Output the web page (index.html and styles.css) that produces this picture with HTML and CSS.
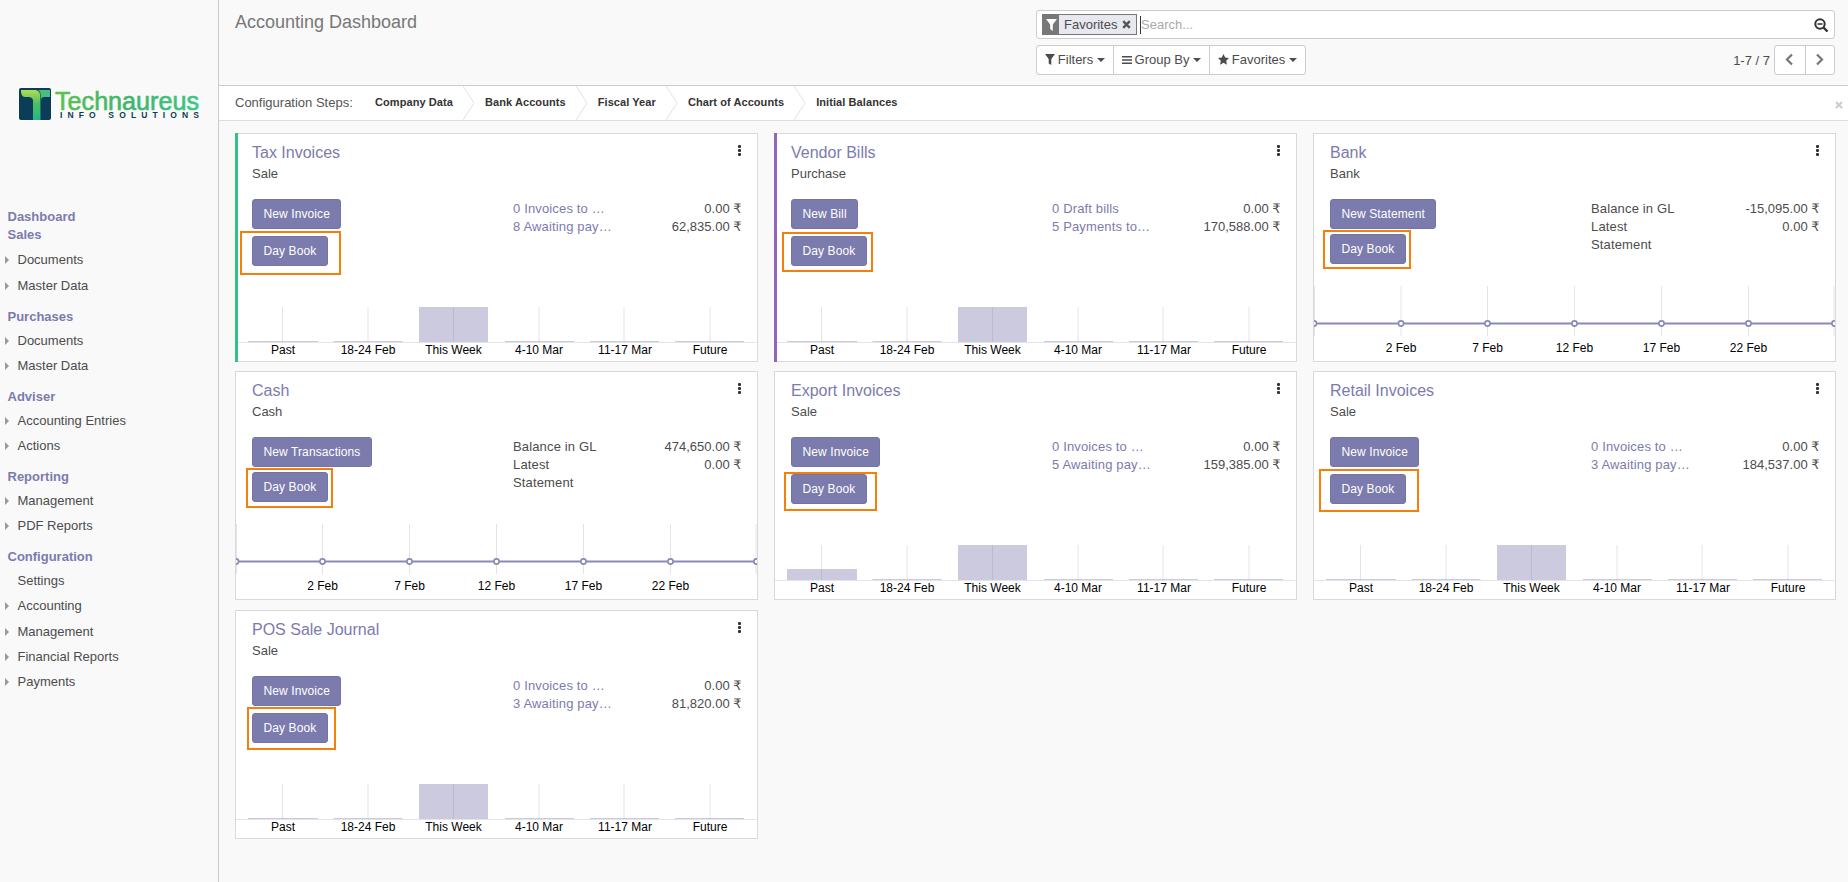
FILE: index.html
```html
<!DOCTYPE html>
<html lang="en">
<head>
<meta charset="utf-8">
<title>Accounting Dashboard</title>
<link rel="stylesheet" href="styles.css">
</head>
<body>
<div class="app">
  <aside class="sidebar">
    <svg class="logo" width="181" height="32" viewBox="0 0 181 32">
      <defs>
        <linearGradient id="lg-text" x1="0" y1="0" x2="1" y2="0">
          <stop offset="0" stop-color="#5cc24e"/><stop offset="0.5" stop-color="#3cb56c"/><stop offset="1" stop-color="#3cc884"/>
        </linearGradient>
        <linearGradient id="lg-t" x1="0" y1="0" x2="0" y2="1">
          <stop offset="0" stop-color="#b4dc50"/><stop offset="0.45" stop-color="#4cc064"/><stop offset="1" stop-color="#22b58a"/>
        </linearGradient>
      </defs>
      <rect width="32" height="32" rx="2" fill="#0c3d58"/>
      <path d="M2 2H15C19 2 21 4 21 7V32H14V13C14 10 12 9 9 9H6C3 9 2 6 2 2z" fill="url(#lg-t)"/>
      <path d="M19 2H31V9H25C23 9 22 10 22 13V32H21.6V7C21.6 5 21 3 19 2z" fill="#46c07c"/>
      <text class="logo-name" x="36" y="22" textLength="144" lengthAdjust="spacingAndGlyphs">Technaureus</text>
      <text class="logo-sub" x="41" y="29.5" textLength="139">INFO SOLUTIONS</text>
    </svg>
    <nav class="menu">
      <a class="menu-head">Dashboard</a>
      <section class="menu-section menu-first">
        <a class="menu-head">Sales</a>
        <ul class="menu-list">
          <li class="has-sub">Documents</li>
          <li class="has-sub">Master Data</li>
        </ul>
      </section>
      <section class="menu-section">
        <a class="menu-head">Purchases</a>
        <ul class="menu-list">
          <li class="has-sub">Documents</li>
          <li class="has-sub">Master Data</li>
        </ul>
      </section>
      <section class="menu-section">
        <a class="menu-head">Adviser</a>
        <ul class="menu-list">
          <li class="has-sub">Accounting Entries</li>
          <li class="has-sub">Actions</li>
        </ul>
      </section>
      <section class="menu-section">
        <a class="menu-head">Reporting</a>
        <ul class="menu-list">
          <li class="has-sub">Management</li>
          <li class="has-sub">PDF Reports</li>
        </ul>
      </section>
      <section class="menu-section">
        <a class="menu-head">Configuration</a>
        <ul class="menu-list">
          <li>Settings</li>
          <li class="has-sub">Accounting</li>
          <li class="has-sub">Management</li>
          <li class="has-sub">Financial Reports</li>
          <li class="has-sub">Payments</li>
        </ul>
      </section>
    </nav>
  </aside>

  <main class="main">
    <header class="control-panel">
      <h1 class="page-title">Accounting Dashboard</h1>
      <div class="controls">
        <div class="search-box">
          <div class="facet">
            <span class="facet-icon"><svg width="11" height="12" viewBox="0 0 11 12"><path d="M0 0h11L6.8 5.5V12L4.2 10V5.5z" fill="#fff"/></svg></span>
            <span class="facet-label">Favorites</span>
            <svg class="facet-close" width="9" height="9" viewBox="0 0 9 9"><path d="M1.2 1.2l6.6 6.6M7.8 1.2L1.2 7.8" stroke="#555" stroke-width="2.4"/></svg>
          </div>
          <span class="search-input">Search...</span>
          <svg class="search-icon" width="15" height="14" viewBox="0 0 15 14"><circle cx="6" cy="6" r="4.7" fill="none" stroke="#333" stroke-width="2"/><path d="M9.5 9.5l4 4" stroke="#333" stroke-width="2.4"/><path d="M3.5 6h5" stroke="#333" stroke-width="1.6"/></svg>
        </div>
        <div class="control-row">
          <div class="btn-group">
            <button class="tool-btn tool-filters"><svg width="10" height="11" viewBox="0 0 10 11"><path d="M0 0h10L6.3 5v6L3.7 9.4V5z" fill="#4c4c4c"/></svg>Filters<i class="caret"></i></button>
            <button class="tool-btn tool-group"><svg width="10" height="10" viewBox="0 0 10 10"><path d="M0 1h10v1.6H0zM0 4.2h10v1.6H0zM0 7.4h10V9H0z" fill="#4c4c4c"/></svg>Group By<i class="caret"></i></button>
            <button class="tool-btn tool-fav"><svg width="11" height="11" viewBox="0 0 11 11"><path d="M5.5 0l1.7 3.6 3.8.5-2.8 2.7.7 3.9-3.4-1.9-3.4 1.9.7-3.9L0 4.1l3.8-.5z" fill="#4c4c4c"/></svg>Favorites<i class="caret"></i></button>
          </div>
          <div class="pager">
            <span class="pager-text">1-7 / 7</span>
            <div class="btn-group">
              <button class="pager-btn"><svg width="9" height="13" viewBox="0 0 9 13"><path d="M7 1.5L2 6.5l5 5" fill="none" stroke="#777" stroke-width="2.2"/></svg></button>
              <button class="pager-btn"><svg width="9" height="13" viewBox="0 0 9 13"><path d="M2 1.5l5 5-5 5" fill="none" stroke="#777" stroke-width="2.2"/></svg></button>
            </div>
          </div>
        </div>
      </div>
    </header>

    <div class="steps-bar">
      <span class="steps-label">Configuration Steps:</span>
      <span class="step">Company Data</span>
      <svg class="step-arrow" width="11" height="34" viewBox="0 0 11 34"><path d="M0 0l11 17L0 34" fill="none" stroke="#e2e2e2"/></svg>
      <span class="step">Bank Accounts</span>
      <svg class="step-arrow" width="11" height="34" viewBox="0 0 11 34"><path d="M0 0l11 17L0 34" fill="none" stroke="#e2e2e2"/></svg>
      <span class="step">Fiscal Year</span>
      <svg class="step-arrow" width="11" height="34" viewBox="0 0 11 34"><path d="M0 0l11 17L0 34" fill="none" stroke="#e2e2e2"/></svg>
      <span class="step">Chart of Accounts</span>
      <svg class="step-arrow" width="11" height="34" viewBox="0 0 11 34"><path d="M0 0l11 17L0 34" fill="none" stroke="#e2e2e2"/></svg>
      <span class="step">Initial Balances</span>
      <svg class="steps-close" width="8" height="8" viewBox="0 0 8 8"><path d="M1 1l6 6M7 1L1 7" stroke="#ccc" stroke-width="2"/></svg>
    </div>

    <div class="dashboard">

      <article class="card stripe-green">
        <span class="dots"><i></i><i></i><i></i></span>
        <h2 class="card-title">Tax Invoices</h2>
        <p class="card-sub">Sale</p>
        <div class="card-body">
          <div class="actions"><button class="btn">New Invoice</button><button class="btn">Day Book</button></div>
          <div class="stats">
            <div class="stat"><a class="stat-label link">0 Invoices to Validate</a><span class="stat-value">0.00 ₹</span></div>
            <div class="stat"><a class="stat-label link">8 Awaiting payments</a><span class="stat-value">62,835.00 ₹</span></div>
          </div>
        </div>
        <svg class="chart chart-bar" viewBox="0 0 520.5 54">
          <path class="grid" d="M46.5 0v35M132 0v35M217.5 0v35M303 0v35M388 0v35M474 0v35"/>
          <path class="bars" d="M12 34h70v1H12zM97.5 34h69v1h-69zM183 0h69v35h-69zM269 34h69v1h-69zM354 34h69v1h-69zM439 34h69v1h-69z"/>
          <path class="axis" d="M0 35.5h520.5"/>
          <text class="tick" x="47" y="47">Past</text><text class="tick" x="132" y="47">18-24 Feb</text><text class="tick" x="217.5" y="47">This Week</text><text class="tick" x="303" y="47">4-10 Mar</text><text class="tick" x="389" y="47">11-17 Mar</text><text class="tick" x="474" y="47">Future</text>
        </svg>
        <span class="mark mark-1"></span>
      </article>

      <article class="card stripe-purple">
        <span class="dots"><i></i><i></i><i></i></span>
        <h2 class="card-title">Vendor Bills</h2>
        <p class="card-sub">Purchase</p>
        <div class="card-body">
          <div class="actions"><button class="btn">New Bill</button><button class="btn">Day Book</button></div>
          <div class="stats">
            <div class="stat"><a class="stat-label link">0 Draft bills</a><span class="stat-value">0.00 ₹</span></div>
            <div class="stat"><a class="stat-label link">5 Payments to do</a><span class="stat-value">170,588.00 ₹</span></div>
          </div>
        </div>
        <svg class="chart chart-bar" viewBox="0 0 520.5 54">
          <path class="grid" d="M46.5 0v35M132 0v35M217.5 0v35M303 0v35M388 0v35M474 0v35"/>
          <path class="bars" d="M12 34h70v1H12zM97.5 34h69v1h-69zM183 0h69v35h-69zM269 34h69v1h-69zM354 34h69v1h-69zM439 34h69v1h-69z"/>
          <path class="axis" d="M0 35.5h520.5"/>
          <text class="tick" x="47" y="47">Past</text><text class="tick" x="132" y="47">18-24 Feb</text><text class="tick" x="217.5" y="47">This Week</text><text class="tick" x="303" y="47">4-10 Mar</text><text class="tick" x="389" y="47">11-17 Mar</text><text class="tick" x="474" y="47">Future</text>
        </svg>
        <span class="mark mark-2"></span>
      </article>

      <article class="card card-cash">
        <span class="dots"><i></i><i></i><i></i></span>
        <h2 class="card-title">Bank</h2>
        <p class="card-sub">Bank</p>
        <div class="card-body">
          <div class="actions"><button class="btn">New Statement</button><button class="btn">Day Book</button></div>
          <div class="stats">
            <div class="stat"><span class="stat-label">Balance in GL</span><span class="stat-value">-15,095.00 ₹</span></div>
            <div class="stat"><span class="stat-label stat-wrap">Latest Statement</span><span class="stat-value">0.00 ₹</span></div>
          </div>
        </div>
        <svg class="chart chart-line" viewBox="0 0 520.5 75">
          <path class="grid" d="M.5 0v50M87 0v50M173.5 0v50M260.5 0v50M347.5 0v50M434.5 0v50M520 0v50"/>
          <path class="line" d="M0 37.5h520.5"/>
          <circle class="dot" cx="0" cy="37.5" r="2.6"/><circle class="dot" cx="87" cy="37.5" r="2.6"/><circle class="dot" cx="173.5" cy="37.5" r="2.6"/><circle class="dot" cx="260.5" cy="37.5" r="2.6"/><circle class="dot" cx="347.5" cy="37.5" r="2.6"/><circle class="dot" cx="434.5" cy="37.5" r="2.6"/><circle class="dot" cx="520.5" cy="37.5" r="2.6"/>
          <text class="tick" x="87" y="66">2 Feb</text><text class="tick" x="173.5" y="66">7 Feb</text><text class="tick" x="260.5" y="66">12 Feb</text><text class="tick" x="347.5" y="66">17 Feb</text><text class="tick" x="434.5" y="66">22 Feb</text>
        </svg>
        <span class="mark mark-3"></span>
      </article>

      <article class="card card-cash">
        <span class="dots"><i></i><i></i><i></i></span>
        <h2 class="card-title">Cash</h2>
        <p class="card-sub">Cash</p>
        <div class="card-body">
          <div class="actions"><button class="btn">New Transactions</button><button class="btn">Day Book</button></div>
          <div class="stats">
            <div class="stat"><span class="stat-label">Balance in GL</span><span class="stat-value">474,650.00 ₹</span></div>
            <div class="stat"><span class="stat-label stat-wrap">Latest Statement</span><span class="stat-value">0.00 ₹</span></div>
          </div>
        </div>
        <svg class="chart chart-line" viewBox="0 0 520.5 75">
          <path class="grid" d="M.5 0v50M86.5 0v50M173.5 0v50M260.5 0v50M347.5 0v50M434.5 0v50M520 0v50"/>
          <path class="line" d="M0 37.5h520.5"/>
          <circle class="dot" cx="0" cy="37.5" r="2.6"/><circle class="dot" cx="86.5" cy="37.5" r="2.6"/><circle class="dot" cx="173.5" cy="37.5" r="2.6"/><circle class="dot" cx="260.5" cy="37.5" r="2.6"/><circle class="dot" cx="347.5" cy="37.5" r="2.6"/><circle class="dot" cx="434.5" cy="37.5" r="2.6"/><circle class="dot" cx="520.5" cy="37.5" r="2.6"/>
          <text class="tick" x="86.5" y="65.5">2 Feb</text><text class="tick" x="173.5" y="65.5">7 Feb</text><text class="tick" x="260.5" y="65.5">12 Feb</text><text class="tick" x="347.5" y="65.5">17 Feb</text><text class="tick" x="434.5" y="65.5">22 Feb</text>
        </svg>
        <span class="mark mark-4"></span>
      </article>

      <article class="card">
        <span class="dots"><i></i><i></i><i></i></span>
        <h2 class="card-title">Export Invoices</h2>
        <p class="card-sub">Sale</p>
        <div class="card-body">
          <div class="actions"><button class="btn">New Invoice</button><button class="btn">Day Book</button></div>
          <div class="stats">
            <div class="stat"><a class="stat-label link">0 Invoices to Validate</a><span class="stat-value">0.00 ₹</span></div>
            <div class="stat"><a class="stat-label link">5 Awaiting payments</a><span class="stat-value">159,385.00 ₹</span></div>
          </div>
        </div>
        <svg class="chart chart-bar" viewBox="0 0 520.5 54">
          <path class="grid" d="M46.5 0v35M132 0v35M217.5 0v35M303 0v35M388 0v35M474 0v35"/>
          <path class="bars" d="M12 24h70v11H12zM97.5 34h69v1h-69zM183 0h69v35h-69zM269 34h69v1h-69zM354 34h69v1h-69zM439 34h69v1h-69z"/>
          <path class="axis" d="M0 35.5h520.5"/>
          <text class="tick" x="47" y="47">Past</text><text class="tick" x="132" y="47">18-24 Feb</text><text class="tick" x="217.5" y="47">This Week</text><text class="tick" x="303" y="47">4-10 Mar</text><text class="tick" x="389" y="47">11-17 Mar</text><text class="tick" x="474" y="47">Future</text>
        </svg>
        <span class="mark mark-5"></span>
      </article>

      <article class="card">
        <span class="dots"><i></i><i></i><i></i></span>
        <h2 class="card-title">Retail Invoices</h2>
        <p class="card-sub">Sale</p>
        <div class="card-body">
          <div class="actions"><button class="btn">New Invoice</button><button class="btn">Day Book</button></div>
          <div class="stats">
            <div class="stat"><a class="stat-label link">0 Invoices to Validate</a><span class="stat-value">0.00 ₹</span></div>
            <div class="stat"><a class="stat-label link">3 Awaiting payments</a><span class="stat-value">184,537.00 ₹</span></div>
          </div>
        </div>
        <svg class="chart chart-bar" viewBox="0 0 520.5 54">
          <path class="grid" d="M46.5 0v35M132 0v35M217.5 0v35M303 0v35M388 0v35M474 0v35"/>
          <path class="bars" d="M12 34h70v1H12zM97.5 34h69v1h-69zM183 0h69v35h-69zM269 34h69v1h-69zM354 34h69v1h-69zM439 34h69v1h-69z"/>
          <path class="axis" d="M0 35.5h520.5"/>
          <text class="tick" x="47" y="47">Past</text><text class="tick" x="132" y="47">18-24 Feb</text><text class="tick" x="217.5" y="47">This Week</text><text class="tick" x="303" y="47">4-10 Mar</text><text class="tick" x="389" y="47">11-17 Mar</text><text class="tick" x="474" y="47">Future</text>
        </svg>
        <span class="mark mark-6"></span>
      </article>

      <article class="card">
        <span class="dots"><i></i><i></i><i></i></span>
        <h2 class="card-title">POS Sale Journal</h2>
        <p class="card-sub">Sale</p>
        <div class="card-body">
          <div class="actions"><button class="btn">New Invoice</button><button class="btn">Day Book</button></div>
          <div class="stats">
            <div class="stat"><a class="stat-label link">0 Invoices to Validate</a><span class="stat-value">0.00 ₹</span></div>
            <div class="stat"><a class="stat-label link">3 Awaiting payments</a><span class="stat-value">81,820.00 ₹</span></div>
          </div>
        </div>
        <svg class="chart chart-bar" viewBox="0 0 520.5 54">
          <path class="grid" d="M46.5 0v35M132 0v35M217.5 0v35M303 0v35M388 0v35M474 0v35"/>
          <path class="bars" d="M12 34h70v1H12zM97.5 34h69v1h-69zM183 0h69v35h-69zM269 34h69v1h-69zM354 34h69v1h-69zM439 34h69v1h-69z"/>
          <path class="axis" d="M0 35.5h520.5"/>
          <text class="tick" x="47" y="47">Past</text><text class="tick" x="132" y="47">18-24 Feb</text><text class="tick" x="217.5" y="47">This Week</text><text class="tick" x="303" y="47">4-10 Mar</text><text class="tick" x="389" y="47">11-17 Mar</text><text class="tick" x="474" y="47">Future</text>
        </svg>
        <span class="mark mark-7"></span>
      </article>

    </div>
  </main>
</div>
</body>
</html>
```
FILE: styles.css
```css
* { box-sizing: border-box; }
html, body { margin: 0; height: 100%; }
body {
  font-family: "Liberation Sans", "DejaVu Sans", sans-serif;
  font-size: 13px;
  color: #4c4c4c;
  background: #f9f9f9;
  overflow: hidden;
}
.app { display: flex; height: 100vh; }

/* Sidebar */
.sidebar {
  width: 219px;
  flex: none;
  padding-top: 88px;
  border-right: 1px solid #ccc;
  background: #f9f9f9;
}
.logo { display: block; margin-left: 19px; overflow: visible; }
.logo-name { font-size: 25px; fill: url(#lg-text); stroke: url(#lg-text); stroke-width: .6; }
.logo-sub { font-size: 8.5px; font-weight: 700; fill: #0c3d58; }
.menu { margin-top: 88px; }
.menu-head {
  display: block;
  padding-left: 7.5px;
  font-weight: 700;
  line-height: 18px;
  color: #7c7bad;
}
.menu-section { margin-bottom: 9px; }
.menu-first { margin-bottom: 9.7px; }
.menu-first .menu-list { margin-top: 3.4px; }
.menu-list { list-style: none; margin: 2.4px 0 0; padding: 0 0 0 17.5px; }
.menu-list li { height: 25.3px; line-height: 25.3px; }
.has-sub::before {
  content: "";
  display: inline-block;
  margin: 0 8.5px 0 -12.5px;
  border-left: 4px solid #999;
  border-top: 4.5px solid transparent;
  border-bottom: 4.5px solid transparent;
  vertical-align: 0;
}

/* Main */
.main { flex: 1; min-width: 0; display: flex; flex-direction: column; }
.control-panel {
  height: 86px;
  flex: none;
  display: flex;
  justify-content: space-between;
  padding: 10px 13px 0 16px;
  border-bottom: 1px solid #ccc;
}
.page-title { margin: 2px 0 0; font-size: 18px; font-weight: 400; line-height: 20px; color: #777; }
.controls { width: 799px; }

.search-box {
  display: flex;
  align-items: center;
  height: 29px;
  padding: 0 5px;
  background: #fff;
  border: 1px solid #ccc;
  border-radius: 3px;
}
.facet {
  display: flex;
  align-items: center;
  height: 21px;
  width: 95px;
  background: #e8e8f0;
  border: 1px solid #777;
}
.facet-icon {
  display: flex;
  align-items: center;
  justify-content: center;
  width: 16px;
  height: 100%;
  background: #777;
}
.facet-label { margin-left: 5px; }
.facet-close { margin-left: 5px; }
.search-input {
  flex: 1;
  margin-left: 3px;
  height: 18px;
  line-height: 18px;
  color: #aaa;
  border-left: 1px solid #333;
}

.control-row {
  display: flex;
  justify-content: space-between;
  align-items: center;
  margin-top: 6px;
}
.btn-group {
  display: flex;
  height: 30px;
  background: #fff;
  border: 1px solid #ccc;
  border-radius: 3px;
}
.tool-btn, .pager-btn {
  display: flex;
  align-items: center;
  justify-content: center;
  padding: 0 0 1px;
  background: none;
  border: 0;
  border-left: 1px solid #ccc;
  font: inherit;
  color: #4c4c4c;
  height: 100%;
}
.btn-group > button:first-child { border-left: 0; }
.tool-filters { width: 76px; gap: 3px; }
.tool-group { width: 96px; gap: 3px; }
.tool-fav { width: 96px; gap: 3px; }
.caret {
  margin-left: 1px;
  border-top: 4.5px solid #4c4c4c;
  border-left: 4px solid transparent;
  border-right: 4px solid transparent;
}
.pager { display: flex; align-items: center; gap: 4px; }
.pager-text { color: #4c4c4c; font-size: 13px; }
.pager-btn { width: 29.5px; }

/* Steps */
.steps-bar {
  position: relative;
  height: 35px;
  flex: none;
  display: flex;
  align-items: center;
  padding: 0 0 1px 16px;
  background: #fff;
  border-bottom: 1px solid #ddd;
}
.steps-label { width: 140px; color: #555; }
.step { margin-bottom: 2px; font-size: 11px; font-weight: 700; color: #333; letter-spacing: .08px; }
.step-arrow { margin: 0 11px 0 10px; flex: none; }
.steps-close { position: absolute; right: 5px; top: 15px; }

/* Dashboard */
.dashboard {
  display: grid;
  grid-template-columns: repeat(3, 522.5px);
  grid-auto-rows: 229px;
  column-gap: 16.5px;
  row-gap: 9.25px;
  padding: 12px 0 0 16px;
}
.card {
  position: relative;
  display: flex;
  flex-direction: column;
  background: #fff;
  border: 1px solid #d9d9d9;
}
.stripe-green::before, .stripe-purple::before {
  content: "";
  position: absolute;
  left: -1px;
  top: -1px;
  bottom: -1px;
  width: 3px;
}
.stripe-green::before { background: #30c381; }
.stripe-purple::before { background: #9365b8; }
.dots {
  position: absolute;
  right: 16px;
  top: 11px;
  display: flex;
  flex-direction: column;
  gap: 1px;
}
.dots i { width: 3px; height: 3px; border-radius: 1px; background: #333; }
.card-title {
  margin: 8px 16px 0;
  font-size: 16px;
  font-weight: 400;
  line-height: 22px;
  color: #7c7bad;
}
.card-sub { margin: 1px 16px 0; line-height: 18px; color: #4c4c4c; }
.card-body { display: flex; margin: 16px 15px 0 16px; }
.actions {
  width: 261px;
  flex: none;
  display: flex;
  flex-direction: column;
  align-items: flex-start;
  gap: 7px;
}
.card-cash .actions { gap: 5px; }
.btn {
  height: 30px;
  padding: 0 10.5px;
  background: #7c7bad;
  border: 1px solid #7374a5;
  border-radius: 3px;
  font: inherit;
  font-size: 12px;
  letter-spacing: .1px;
  color: #fff;
}
.stats { flex: 1; min-width: 0; padding-top: 1px; }
.stat { display: flex; justify-content: space-between; line-height: 18px; }
.stat-label {
  width: 99.5px;
  flex: none;
  white-space: nowrap;
  overflow: hidden;
  text-overflow: ellipsis;
  letter-spacing: .15px;
}
.stat-wrap { white-space: normal; width: 90px; }
.link { color: #7c7bad; }
.stat-value { text-align: right; }

.chart { display: block; margin-top: auto; width: 100%; }
.chart-bar { height: 54px; }
.chart-line { height: 75px; }
.grid { stroke: #e4e4e8; stroke-width: 1; fill: none; }
.bars { fill: #7c7bad; fill-opacity: .4; }
.axis { stroke: #e4e4e8; stroke-width: 1; fill: none; }
.tick { font-size: 12px; fill: #000; text-anchor: middle; }
.line { stroke: #8a89b6; stroke-width: 2; fill: none; }
.dot { fill: #fff; stroke: #8a89b6; stroke-width: 1.6; }

/* Orange highlight frames, placed over the card by hand */
.mark { position: absolute; border: 2px solid #f57f0a; }
.mark-1 { left: 4px; top: 97px; width: 101px; height: 44px; }
.mark-2 { left: 7px; top: 98px; width: 91px; height: 40px; }
.mark-3 { left: 9px; top: 96px; width: 88px; height: 39px; }
.mark-4 { left: 10px; top: 95.75px; width: 87px; height: 40px; }
.mark-5 { left: 9px; top: 99.75px; width: 93px; height: 39px; }
.mark-6 { left: 5px; top: 96.75px; width: 100px; height: 43px; }
.mark-7 { left: 11px; top: 96.5px; width: 89px; height: 43px; }
```
